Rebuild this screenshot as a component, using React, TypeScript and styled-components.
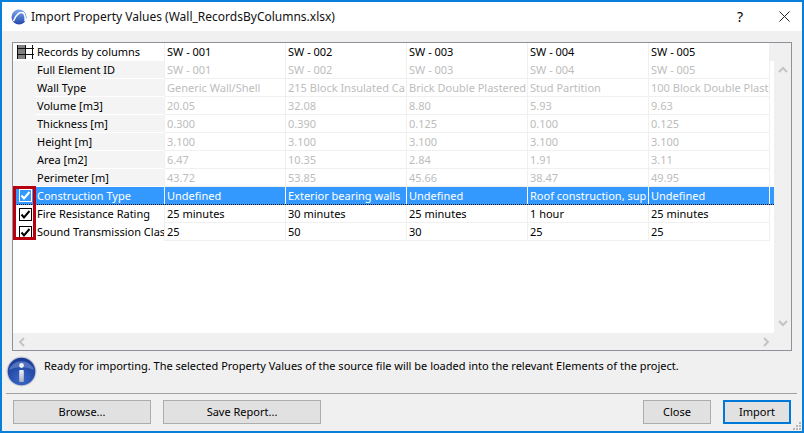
import styled, { createGlobalStyle } from "styled-components";

const GlobalStyle = createGlobalStyle`
  html, body {
    margin: 0;
    padding: 0;
    background: #f0f0f0;
  }
`;

const Window = styled.div`
  box-sizing: border-box;
  position: relative;
  width: 804px;
  height: 433px;
  display: flex;
  flex-direction: column;
  border: 2px solid #0a7fd9;
  background: #f0f0f0;
  font-family: "Noto Sans", "Liberation Sans", sans-serif;
  font-size: 11px;
  color: #000;
  overflow: hidden;
`;

const TitleBar = styled.div`
  height: 29px;
  flex: none;
  display: flex;
  align-items: center;
  background: #fff;
  padding-left: 9px;
`;

const TitleText = styled.div`
  margin-left: 4px;
  font-size: 12px;
  color: #111;
`;

const TitleButtons = styled.div`
  margin-left: auto;
  display: flex;
  align-items: center;
  gap: 36px;
  padding-right: 12px;
  font-size: 14px;
`;

const Frame = styled.div`
  box-sizing: border-box;
  position: relative;
  margin: 11px 0 0 10px;
  width: 780px;
  height: 309px;
  flex: none;
  display: flex;
  flex-direction: column;
  border: 1px solid #8d9298;
`;

const Main = styled.div`
  flex: 1;
  display: flex;
  min-height: 0;
`;

const TableArea = styled.div`
  width: 761px;
  background: #fff;
`;

const Row = styled.div<{ $selected?: boolean }>`
  display: grid;
  grid-template-columns: 22px 130px repeat(5, 121px) 3px;
  height: 18px;
  box-sizing: border-box;
  background: ${(p) => (p.$selected ? "#3399ff" : "#fff")};
  color: ${(p) => (p.$selected ? "#fff" : "inherit")};
  ${(p) => p.$selected && "border-bottom: 1px dotted #111;"}
`;

const IconCell = styled.div<{ $shaded?: boolean }>`
  box-sizing: border-box;
  padding-left: 2px;
  display: flex;
  align-items: center;
  justify-content: center;
  background: ${(p) => (p.$shaded ? "#f4f4f4" : "transparent")};
`;

const LabelCell = styled.div<{ $shaded?: boolean }>`
  box-sizing: border-box;
  padding-left: 2px;
  line-height: 17px;
  white-space: nowrap;
  overflow: hidden;
  background: ${(p) => (p.$shaded ? "#f4f4f4" : "transparent")};
  border-bottom: ${(p) => (p.$shaded ? "1px solid #fff" : "none")};
  border-right: 1px solid #f0f0f0;
`;

const ValueCell = styled.div<{ $tone: Tone }>`
  box-sizing: border-box;
  padding-left: 2px;
  line-height: 17px;
  white-space: nowrap;
  overflow: hidden;
  color: ${(p) =>
    p.$tone === "muted" ? "#bdbdbd" : p.$tone === "selected" ? "#fff" : "#000"};
  border-right: 1px solid ${(p) => (p.$tone === "selected" ? "#fff" : "#f0f0f0")};
  border-bottom: ${(p) =>
    p.$tone === "header" || p.$tone === "selected" ? "none" : "1px solid #f0f0f0"};
`;

const CornerFill = styled.div`
  background: #f0f0f0;
  width: 5px;
`;

const VScroll = styled.div`
  width: 17px;
  flex: none;
  box-sizing: border-box;
  padding: 22px 0 5px;
  display: flex;
  flex-direction: column;
  align-items: center;
  justify-content: space-between;
  background: #f0f0f0;
`;

const HScroll = styled.div`
  height: 17px;
  flex: none;
  box-sizing: border-box;
  padding: 0 20px 0 4px;
  display: flex;
  align-items: center;
  justify-content: space-between;
  background: #f0f0f0;
`;

const CheckOverlay = styled.div`
  position: absolute;
  left: 0;
  top: 143px;
  width: 23px;
  height: 54px;
  box-sizing: border-box;
  border: 3px solid #b80010;
  pointer-events: none;
`;

const InfoRow = styled.div`
  height: 42px;
  flex: none;
  display: flex;
  align-items: center;
  padding-left: 4px;
  gap: 7px;
  box-sizing: border-box;
  padding-bottom: 1px;
`;

const InfoText = styled.span`
  margin-bottom: 13px;
`;

const Divider = styled.div`
  height: 1px;
  margin: 0 5px 0 4px;
  background: #a0a0a0;
  flex: none;
`;

const ButtonRow = styled.div`
  flex: none;
  display: flex;
  padding: 6px 11px 0;
  gap: 12px;
`;

const Button = styled.div<{ $width: number; $primary?: boolean }>`
  box-sizing: border-box;
  width: ${(p) => p.$width}px;
  height: 24px;
  padding-bottom: 1px;
  display: flex;
  align-items: center;
  justify-content: center;
  background: #e1e1e1;
  border: ${(p) => (p.$primary ? "2px solid #0078d7" : "1px solid #adadad")};
`;

const Spacer = styled.div`
  flex: 1;
`;

const Grip = styled.svg`
  position: absolute;
  right: 0;
  bottom: 0;
`;

type Tone = "header" | "muted" | "active" | "selected";

// the texts are cut at the column edge the same way the dialog shows them
const rows: { label: string; values: string[]; tone: Tone; checked?: boolean }[] = [
  { label: "Full Element ID", values: ["SW - 001", "SW - 002", "SW - 003", "SW - 004", "SW - 005"], tone: "muted" },
  { label: "Wall Type", values: ["Generic Wall/Shell", "215 Block Insulated Ca", "Brick Double Plastered", "Stud Partition", "100 Block Double Plast"], tone: "muted" },
  { label: "Volume [m3]", values: ["20.05", "32.08", "8.80", "5.93", "9.63"], tone: "muted" },
  { label: "Thickness [m]", values: ["0.300", "0.390", "0.125", "0.100", "0.125"], tone: "muted" },
  { label: "Height [m]", values: ["3.100", "3.100", "3.100", "3.100", "3.100"], tone: "muted" },
  { label: "Area [m2]", values: ["6.47", "10.35", "2.84", "1.91", "3.11"], tone: "muted" },
  { label: "Perimeter [m]", values: ["43.72", "53.85", "45.66", "38.47", "49.95"], tone: "muted" },
  { label: "Construction Type", values: ["Undefined", "Exterior bearing walls", "Undefined", "Roof construction, sup", "Undefined"], tone: "selected", checked: true },
  { label: "Fire Resistance Rating", values: ["25 minutes", "30 minutes", "25 minutes", "1 hour", "25 minutes"], tone: "active", checked: true },
  { label: "Sound Transmission Clas", values: ["25", "50", "30", "25", "25"], tone: "active", checked: true },
];

function AppLogo() {
  return (
    <svg width="16" height="16" viewBox="0 0 16 16">
      <defs>
        <linearGradient id="logoFill" x1="0" y1="0" x2="0" y2="1">
          <stop offset="0" stopColor="#7ea6ee" />
          <stop offset="1" stopColor="#2148ac" />
        </linearGradient>
      </defs>
      <circle cx="8" cy="8" r="7.5" fill="url(#logoFill)" />
      <path d="M2.5 12 C5 5 9 2.5 12.5 4 C14 6 14.5 9 14 12" fill="none" stroke="#fff" strokeWidth="1.6" />
    </svg>
  );
}

function GridGlyph() {
  return (
    <svg width="17" height="14" viewBox="0 0 17 14">
      <rect x="0" y="0" width="8" height="14" fill="#808080" />
      <path d="M0.5 0V14M8.5 0V14M15.5 0V14M0 3.5H17M0 9.5H17" stroke="#111" strokeWidth="1" fill="none" />
    </svg>
  );
}

function CheckBox({ inverted }: { inverted: boolean }) {
  const color = inverted ? "#fff" : "#000";
  return (
    <svg width="13" height="13" viewBox="0 0 13 13">
      <rect x="0.5" y="0.5" width="12" height="12" fill={inverted ? "#3399ff" : "#fff"} stroke={color} />
      <path d="M2.5 6.5 L5 9.5 L10.5 3" fill="none" stroke={color} strokeWidth="2" />
    </svg>
  );
}

function Chevron({ direction }: { direction: "up" | "down" | "left" | "right" }) {
  const d = {
    up: "M1 7 L5 3 L9 7",
    down: "M1 3 L5 7 L9 3",
    left: "M7 1 L3 5 L7 9",
    right: "M3 1 L7 5 L3 9",
  }[direction];
  return (
    <svg width="10" height="10" viewBox="0 0 10 10">
      <path d={d} fill="none" stroke="#c4c4c4" strokeWidth="2" />
    </svg>
  );
}

function InfoIcon() {
  return (
    <svg width="31" height="31" viewBox="0 0 31 31">
      <defs>
        <radialGradient id="infoFill" cx="0.5" cy="0.8" r="0.8">
          <stop offset="0" stopColor="#3a68cc" />
          <stop offset="1" stopColor="#1a3a92" />
        </radialGradient>
        <linearGradient id="infoStem" x1="0" y1="0" x2="0" y2="1">
          <stop offset="0" stopColor="#f2f4f8" />
          <stop offset="1" stopColor="#a9afbc" />
        </linearGradient>
      </defs>
      <circle cx="15.5" cy="15.5" r="15" fill="#c8ccd6" />
      <circle cx="15.5" cy="15.5" r="13.8" fill="url(#infoFill)" />
      <path d="M3 14 A13 12 0 0 1 28 14 Q15 8 3 14 Z" fill="#8fa8e2" opacity="0.45" />
      <circle cx="15.5" cy="9.5" r="2.4" fill="#eef1f7" />
      <rect x="13.2" y="14" width="4.6" height="12" rx="1" fill="url(#infoStem)" />
    </svg>
  );
}

export default function App() {
  return (
    <>
      <GlobalStyle />
      <Window>
        <TitleBar>
          <AppLogo />
          <TitleText>Import Property Values (Wall_RecordsByColumns.xlsx)</TitleText>
          <TitleButtons>
            <span>?</span>
            <svg width="11" height="11" viewBox="0 0 11 11">
              <path d="M0.5 0.5 L10.5 10.5 M10.5 0.5 L0.5 10.5" stroke="#222" strokeWidth="1" />
            </svg>
          </TitleButtons>
        </TitleBar>

        <Frame>
          <Main>
            <TableArea>
              <Row>
                <IconCell>
                  <GridGlyph />
                </IconCell>
                <LabelCell>Records by columns</LabelCell>
                {["SW - 001", "SW - 002", "SW - 003", "SW - 004", "SW - 005"].map((v) => (
                  <ValueCell key={v} $tone="header">{v}</ValueCell>
                ))}
                <CornerFill />
              </Row>
              {rows.map((row) => {
                const selected = row.tone === "selected";
                return (
                  <Row key={row.label} $selected={selected}>
                    <IconCell $shaded={!row.checked}>
                      {row.checked && <CheckBox inverted={selected} />}
                    </IconCell>
                    <LabelCell $shaded={!row.checked}>{row.label}</LabelCell>
                    {row.values.map((v, i) => (
                      <ValueCell key={i} $tone={row.tone}>{v}</ValueCell>
                    ))}
                  </Row>
                );
              })}
            </TableArea>
            <VScroll>
              <Chevron direction="up" />
              <Chevron direction="down" />
            </VScroll>
          </Main>
          <HScroll>
            <Chevron direction="left" />
            <Chevron direction="right" />
          </HScroll>
          <CheckOverlay />
        </Frame>

        <InfoRow>
          <InfoIcon />
          <InfoText>Ready for importing. The selected Property Values of the source file will be loaded into the relevant Elements of the project.</InfoText>
        </InfoRow>
        <Divider />

        <ButtonRow>
          <Button $width={138}>Browse...</Button>
          <Button $width={158}>Save Report...</Button>
          <Spacer />
          <Button $width={68}>Close</Button>
          <Button $width={68} $primary>Import</Button>
        </ButtonRow>

        <Grip width="10" height="10" viewBox="0 0 10 10">
          <path d="M7 1h2v2h-2zM4 4h2v2h-2zM7 4h2v2h-2zM1 7h2v2h-2zM4 7h2v2h-2zM7 7h2v2h-2z" fill="#b8b8b8" />
        </Grip>
      </Window>
    </>
  );
}
